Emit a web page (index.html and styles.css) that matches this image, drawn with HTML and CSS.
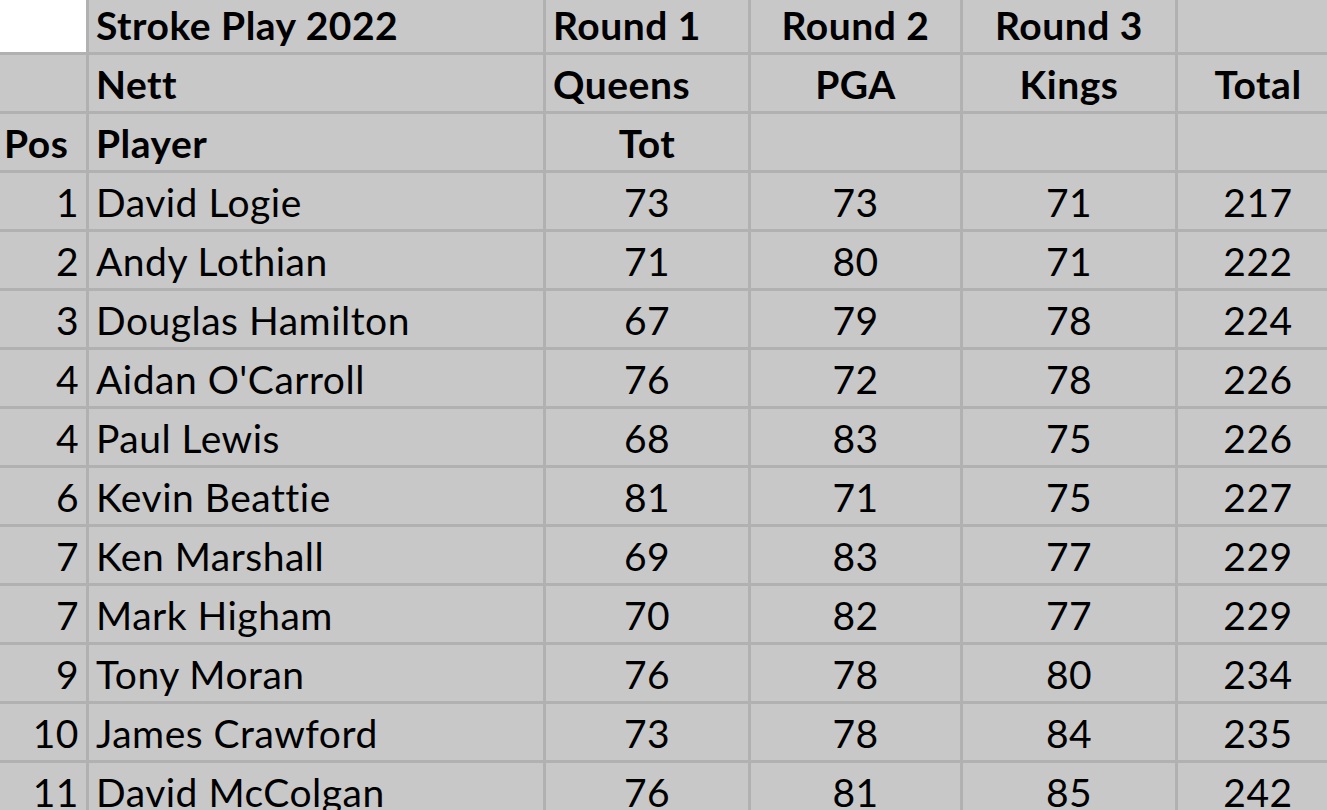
FILE: index.html
```html
<!DOCTYPE html>
<html>
<head>
<meta charset="utf-8">
<link rel="stylesheet" href="styles.css">
</head>
<body>
<div class="sheet">
  <div class="cell blank"></div>
  <div class="cell b left">Stroke Play 2022</div>
  <div class="cell b left">Round 1</div>
  <div class="cell b center">Round 2</div>
  <div class="cell b center r3">Round 3</div>
  <div class="cell"></div>

  <div class="cell"></div>
  <div class="cell b left">Nett</div>
  <div class="cell b left">Queens</div>
  <div class="cell b center">PGA</div>
  <div class="cell b center">Kings</div>
  <div class="cell b center">Total</div>

  <div class="cell b left pos">Pos</div>
  <div class="cell b left">Player</div>
  <div class="cell b center">Tot</div>
  <div class="cell"></div>
  <div class="cell"></div>
  <div class="cell"></div>

  <div class="cell right">1</div><div class="cell left">David Logie</div><div class="cell center">73</div><div class="cell center">73</div><div class="cell center">71</div><div class="cell center">217</div>
  <div class="cell right">2</div><div class="cell left">Andy Lothian</div><div class="cell center">71</div><div class="cell center">80</div><div class="cell center">71</div><div class="cell center">222</div>
  <div class="cell right">3</div><div class="cell left">Douglas Hamilton</div><div class="cell center">67</div><div class="cell center">79</div><div class="cell center">78</div><div class="cell center">224</div>
  <div class="cell right">4</div><div class="cell left">Aidan O'Carroll</div><div class="cell center">76</div><div class="cell center">72</div><div class="cell center">78</div><div class="cell center">226</div>
  <div class="cell right">4</div><div class="cell left">Paul Lewis</div><div class="cell center">68</div><div class="cell center">83</div><div class="cell center">75</div><div class="cell center">226</div>
  <div class="cell right">6</div><div class="cell left">Kevin Beattie</div><div class="cell center">81</div><div class="cell center">71</div><div class="cell center">75</div><div class="cell center">227</div>
  <div class="cell right">7</div><div class="cell left">Ken Marshall</div><div class="cell center">69</div><div class="cell center">83</div><div class="cell center">77</div><div class="cell center">229</div>
  <div class="cell right">7</div><div class="cell left">Mark Higham</div><div class="cell center">70</div><div class="cell center">82</div><div class="cell center">77</div><div class="cell center">229</div>
  <div class="cell right">9</div><div class="cell left">Tony Moran</div><div class="cell center">76</div><div class="cell center">78</div><div class="cell center">80</div><div class="cell center">234</div>
  <div class="cell right">10</div><div class="cell left">James Crawford</div><div class="cell center">73</div><div class="cell center">78</div><div class="cell center">84</div><div class="cell center">235</div>
  <div class="cell right">11</div><div class="cell left">David McColgan</div><div class="cell center">76</div><div class="cell center">81</div><div class="cell center">85</div><div class="cell center">242</div>
</div>
</body>
</html>
```

FILE: styles.css
```css
html, body {
  margin: 0;
  padding: 0;
  background: #c8c8c8;
  overflow: hidden;
}

.sheet {
  display: grid;
  grid-template-columns: 86px 454px 202px 209px 212px 160px;
  grid-template-rows: 52px;
  grid-auto-rows: 56px;
  gap: 3px;
  background: #b1b1b1;
  width: 1338px;
  font-family: "Lato", "Liberation Sans", sans-serif;
  font-size: 39px;
  letter-spacing: 0.5px;
  color: #000;
}

.cell {
  background: #c8c8c8;
  display: flex;
  align-items: flex-end;
  line-height: 1;
  padding: 0 7px 7px 7px;
  white-space: nowrap;
  overflow: hidden;
}

.blank {
  background: #ffffff;
}

.b {
  font-weight: 700;
}

.left {
  justify-content: flex-start;
}

.center {
  justify-content: center;
}

.right {
  justify-content: flex-end;
}

.pos {
  padding-left: 4px;
}
```
